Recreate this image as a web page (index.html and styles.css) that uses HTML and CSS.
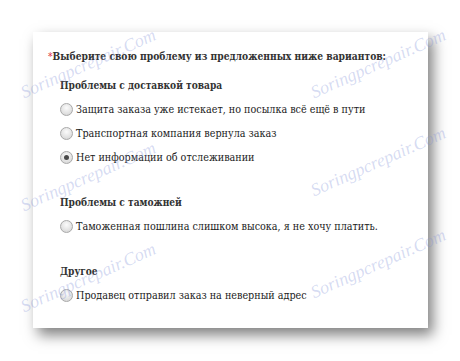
FILE: index.html
```html
<!DOCTYPE html>
<html>
<head>
    <meta charset="UTF-8">
    <meta name="viewport" content="width=device-width, initial-scale=1.0">
    <title>Выбор проблемы</title>
    <link rel="stylesheet" href="styles.css">
</head>
<body>
    <div id="container">
        <p class="question"><span class="req">*</span>Выберите свою проблему из предложенных ниже вариантов:</p>

        <div class="group">
            <h4>Проблемы с доставкой товара</h4>
            <label class="option"><input type="radio" name="problem"> Защита заказа уже истекает, но посылка всё ещё в пути</label>
            <label class="option"><input type="radio" name="problem"> Транспортная компания вернула заказ</label>
            <label class="option"><input type="radio" name="problem" checked> Нет информации об отслеживании</label>
        </div>

        <div class="group">
            <h4>Проблемы с таможней</h4>
            <label class="option"><input type="radio" name="problem"> Таможенная пошлина слишком высока, я не хочу платить.</label>
        </div>

        <div class="group">
            <h4>Другое</h4>
            <label class="option"><input type="radio" name="problem"> Продавец отправил заказ на неверный адрес</label>
        </div>
    </div>

    <div class="mark m1">Soringpcrepair.Com</div>
    <div class="mark m2">Soringpcrepair.Com</div>
    <div class="mark m3">Soringpcrepair.Com</div>
    <div class="mark m4">Soringpcrepair.Com</div>
    <div class="mark m5">Soringpcrepair.Com</div>
    <div class="mark m6">Soringpcrepair.Com</div>
</body>
</html>
```

FILE: styles.css
```css
body {
    font-family: "DejaVu Serif Condensed", "DejaVu Serif", serif;
    background-color: #fff;
    color: #333;
    margin: 0;
    padding: 32px 0 0 33px;
    position: relative;
    height: 361px;
    box-sizing: border-box;
    overflow: hidden;
}

#container {
    background-color: #fff;
    width: 395px;
    height: 296px;
    box-sizing: border-box;
    padding: 14px 15px 0 15px;
    box-shadow: 5px 7px 13px rgba(0, 0, 0, 0.5);
}

.question {
    margin: 0 0 9px 0;
    font-size: 10.2px;
    font-weight: bold;
    line-height: 20px;
    white-space: nowrap;
}

.req {
    color: #e0344a;
    font-weight: normal;
}

.group {
    padding-left: 12px;
    margin-bottom: 24px;
}

.group h4 {
    margin: 0 0 1px 0;
    font-size: 10.1px;
    line-height: 20px;
}

.option {
    display: flex;
    align-items: center;
    height: 24px;
    font-size: 10.7px;
    color: #222;
}

.option input {
    appearance: none;
    -webkit-appearance: none;
    width: 13px;
    height: 13px;
    margin: 0 3px 0 0;
    border: 1px solid #a9a9a9;
    border-radius: 50%;
    background: radial-gradient(circle at 50% 35%, #fbfbfb 0%, #e4e4e4 55%, #cfcfcf 100%);
    box-sizing: border-box;
    position: relative;
}

.option input:checked::after {
    content: "";
    position: absolute;
    left: 3px;
    top: 3px;
    width: 5px;
    height: 5px;
    border-radius: 50%;
    background-color: #4a4a4a;
}

.mark {
    position: absolute;
    font-family: "Liberation Serif", serif;
    font-style: italic;
    font-size: 18px;
    color: rgba(130, 145, 215, 0.32);
    transform: rotate(-24deg);
    transform-origin: left bottom;
    white-space: nowrap;
    pointer-events: none;
}

.m1 { left: 26px; top: 82px; }
.m2 { left: 316px; top: 82px; }
.m3 { left: 26px; top: 195px; }
.m4 { left: 316px; top: 180px; }
.m5 { left: 26px; top: 296px; }
.m6 { left: 316px; top: 282px; }
```
